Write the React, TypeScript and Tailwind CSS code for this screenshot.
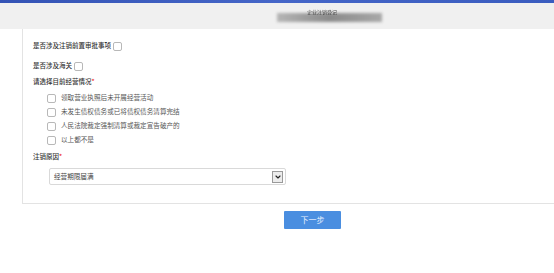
import { ChevronDown } from 'lucide-react'

const font = { fontFamily: '"Noto Sans CJK SC", "Liberation Sans", sans-serif' }

function Box() {
  return <span className="inline-block w-[9px] h-[9px] rounded-[2px] border border-[#b8b8b8] bg-white shrink-0" />
}

function Star() {
  return <span className="text-[#e33]">*</span>
}

const options = [
  '领取营业执照后未开展经营活动',
  '未发生债权债务或已将债权债务清算完结',
  '人民法院裁定强制清算或裁定宣告破产的',
  '以上都不是',
]

export default function App() {
  return (
    <div className="w-[554px] h-[273px] bg-white overflow-hidden" style={font}>
      <div className="h-[3px] bg-gradient-to-r from-[#3453b5] via-[#4566c8] to-[#3a5cbf]" />
      <div className="h-[26px] bg-[#f0f0f0] flex items-center pl-[277px]">
        <div className="relative w-[105px] h-[9px] mt-[3px]">
          <div className="absolute inset-0 blur-[1.5px] bg-gradient-to-r from-[#b5b5b5] via-[#8a8a8a] to-[#a8a8a8]" />
          <span className="absolute left-[30px] -top-[5px] text-[5px] text-[#444] blur-[0.7px]">
            企业注销登记
          </span>
        </div>
      </div>

      <div className="pl-[22px]">
        <div className="border-l border-b border-[#e3e3e3] pl-[10px] pt-[12px] pb-[18px]">
          <div className="flex items-center h-[10px] gap-[2px] text-[6.5px] text-[#333] font-medium">
            <span>是否涉及注销前置审批事项</span>
            <Box />
          </div>
          <div className="flex items-center h-[10px] gap-[2px] mt-[10px] text-[6.5px] text-[#333] font-medium">
            <span>是否涉及海关</span>
            <Box />
          </div>
          <div className="flex items-center h-[10px] mt-[6px] text-[6.5px] text-[#333] font-medium">
            <span>请选择目前经营情况</span>
            <Star />
          </div>
          <div className="mt-[6px] flex flex-col gap-[4px] pl-[14px]">
            {options.map((o) => (
              <div key={o} className="flex items-center h-[10px] gap-[5px] text-[6.6px] text-[#555]">
                <Box />
                <span>{o}</span>
              </div>
            ))}
          </div>
          <div className="flex items-center h-[10px] mt-[7px] text-[6.5px] text-[#333] font-medium">
            <span>注销原因</span>
            <Star />
          </div>
          <div className="mt-[6px] ml-[16px] w-[237px] h-[17px] border border-[#d9d9d9] rounded-[2px] flex items-center justify-between pl-[4px] pr-[2px]">
            <span className="text-[6.6px] text-[#444]">经营期限届满</span>
            <span className="w-[11px] h-[12px] bg-[#ececec] border border-[#9a9a9a] flex items-center justify-center">
              <ChevronDown size={8} strokeWidth={3.5} className="text-[#222]" />
            </span>
          </div>
        </div>

        <div className="flex justify-start pl-[262px] mt-[7px]">
          <button className="w-[57px] h-[18px] bg-[#4a8ee0] text-[#e8f0ff] text-[8px] rounded-[1px]">
            下一步
          </button>
        </div>
      </div>
    </div>
  )
}
